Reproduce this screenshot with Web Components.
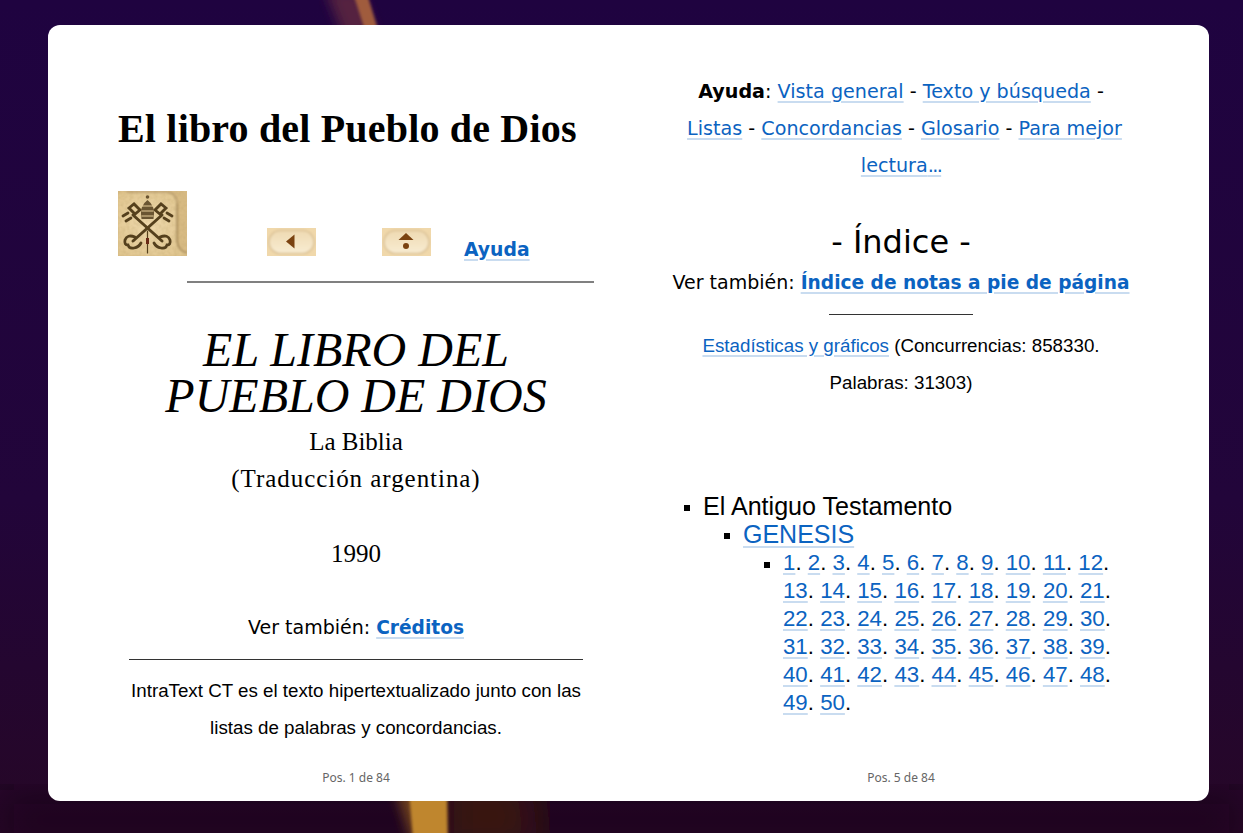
<!DOCTYPE html>
<html lang="es">
<head>
<meta charset="utf-8">
<title>El libro del Pueblo de Dios</title>
<style>
html, body { margin: 0; height: 100%; }
body { overflow: hidden; background: #1f0440; }
</style>
</head>
<body>
<reader-view>
  <book-page>
    <h-title slot="top">El libro del Pueblo de Dios</h-title>
    <nav-strip></nav-strip>
    <cover-block></cover-block>
    <span slot="pos">Pos. 1 de 84</span>
  </book-page>
  <book-page>
    <index-block></index-block>
    <span slot="pos">Pos. 5 de 84</span>
  </book-page>
</reader-view>

<script>
const linkCss = `
a { color: #0b63c1; text-decoration: underline 2px #c9dcf0; text-underline-offset: 3px; }
`;

class ReaderView extends HTMLElement {
    constructor() {
        super();
        const root = this.attachShadow({ mode: 'open' });
        root.innerHTML = `<style>
:host { display: block; position: relative; width: 1243px; height: 833px; overflow: hidden; box-sizing: border-box; padding: 25px 34px 32px 48px; }
.bg { position: absolute; inset: 0; width: 100%; height: 100%; }
.card { position: relative; height: 776px; background: #fff; border-radius: 12px; display: grid; grid-template-columns: 1fr 1fr; column-gap: 69px; padding: 0 70px; box-sizing: border-box; }
</style>
<svg class="bg" viewBox="0 0 1243 833" preserveAspectRatio="none">
  <defs>
    <linearGradient id="base" x1="0" y1="0" x2="0" y2="1">
      <stop offset="0" stop-color="#1f0340"/>
      <stop offset="0.6" stop-color="#22053a"/>
      <stop offset="1" stop-color="#260726"/>
    </linearGradient>
    <filter id="b2"><feGaussianBlur stdDeviation="1.5"/></filter>
    <filter id="b5"><feGaussianBlur stdDeviation="6"/></filter>
    <filter id="b10"><feGaussianBlur stdDeviation="20"/></filter>
  </defs>
  <rect width="1243" height="833" fill="url(#base)"/>
  <rect x="0" y="790" width="1243" height="60" fill="#180414" opacity="0.5" filter="url(#b10)"/>
  <path d="M325 -10 L360 -10 L378 40 L345 40 Z" fill="#54203f" filter="url(#b5)"/>
  <path d="M352 -10 L366 -10 L381 40 L368 40 Z" fill="#a05c3e" filter="url(#b2)"/>
  <path d="M440 780 L530 780 L540 850 L440 850 Z" fill="#3a120f" filter="url(#b10)"/>
  <path d="M392 780 L440 780 L440 850 L414 850 Z" fill="#6a3c1c" filter="url(#b5)"/>
  <path d="M408 780 L447 780 L448 850 L414 850 Z" fill="#bf862e" filter="url(#b2)"/>
</svg>
<div class="card"><slot></slot></div>`;
    }
}

class BookPage extends HTMLElement {
    constructor() {
        super();
        const root = this.attachShadow({ mode: 'open' });
        root.innerHTML = `<style>
:host { display: flex; flex-direction: column; position: relative; height: 100%; min-width: 0; }
.pos { position: absolute; left: 0; right: 0; top: 745px; text-align: center; font: 12px/15px "Noto Sans", sans-serif; color: #666; }
</style>
<slot name="top"></slot>
<slot></slot>
<div class="pos"><slot name="pos"></slot></div>`;
    }
}

class HTitle extends HTMLElement {
    constructor() {
        super();
        const root = this.attachShadow({ mode: 'open' });
        root.innerHTML = `<style>
:host { display: block; margin-top: 82px; font: bold 40px/44px "Liberation Serif", serif; color: #000; white-space: nowrap; letter-spacing: 0.18px; }
</style><slot></slot>`;
    }
}

class NavStrip extends HTMLElement {
    constructor() {
        super();
        const root = this.attachShadow({ mode: 'open' });
        root.innerHTML = `<style>
:host { display: block; margin-top: 40px; }
.row { display: flex; align-items: flex-end; height: 65px; }
svg { display: block; flex: none; }
.b1 { margin-left: 80px; }
.b2 { margin-left: 66px; }
.help { margin-left: 33px; font: bold 18.8px/24px "DejaVu Sans", sans-serif; margin-bottom: -6px; }
hr { margin: 25px 0 0 69px; border: 0; height: 2px; background: #808080; }
${linkCss}
</style>
<div class="row">
  <svg width="69" height="65" viewBox="0 0 69 65">
    <defs>
      <filter id="soft"><feGaussianBlur stdDeviation="0.5"/></filter>
      <filter id="soft2"><feGaussianBlur stdDeviation="1.2"/></filter>
      <filter id="grain" x="0" y="0" width="100%" height="100%">
        <feTurbulence type="fractalNoise" baseFrequency="0.25" numOctaves="2" seed="4"/>
        <feColorMatrix values="0 0 0 0 0.45  0 0 0 0 0.32  0 0 0 0 0.12  0.9 0 0 0 -0.3"/>
      </filter>
      <radialGradient id="paper" cx="0.45" cy="0.5" r="0.7">
        <stop offset="0" stop-color="#edd8ac"/>
        <stop offset="1" stop-color="#dfc48c"/>
      </radialGradient>
    </defs>
    <rect width="69" height="65" fill="#d8bb84"/>
    <g filter="url(#soft2)">
      <path d="M0 4 Q1 1 8 1 H48 Q58 1 59 12 V50 Q60 60 69 62 V65 H0 Z" fill="url(#paper)"/>
      <path d="M59 12 V50 Q60 60 69 62" fill="none" stroke="#9c8050" stroke-width="1.6"/>
      <path d="M8 1 H48 Q58 1 59 12" fill="none" stroke="#b2976a" stroke-width="1.4"/>
    </g>
    <rect width="69" height="65" filter="url(#grain)" opacity="0.45"/>
    <g filter="url(#soft)" fill="none" stroke="#54401f" stroke-linecap="round">
      <path d="M15 24 L44 50" stroke-width="3"/>
      <path d="M44 24 L15 50" stroke-width="3"/>
      <path d="M5 25 l5 -3 M8 30 l5 -3" stroke-width="2.8"/>
      <path d="M11 17 l5 -4 l6 6 l-5 4 z" stroke-width="2.8"/>
      <path d="M54 25 l-5 -3 M51 30 l-5 -3" stroke-width="2.8"/>
      <path d="M48 17 l-5 -4 l-6 6 l5 4 z" stroke-width="2.8"/>
      <path d="M17 46 q-8 -3 -10 3 q-1 5 3 5 q1 4 6 3 q5 -1 7 -5" stroke-width="2.8"/>
      <path d="M42 46 q8 -3 10 3 q1 5 -3 5 q-1 4 -6 3 q-5 -1 -7 -5" stroke-width="2.8"/>
      <path d="M29.5 40 V62" stroke-width="1.2"/>
    </g>
    <g filter="url(#soft)">
      <path d="M23.5 28 Q21 15 29.5 9 Q38 15 35.5 28 Z" fill="#6a5430"/>
      <circle cx="29.5" cy="6" r="1.8" fill="#6a5430"/>
      <path d="M24 15 H35 M23.5 20 H35.5 M23.5 25 H35.5" stroke="#e6cd9a" stroke-width="1" fill="none"/>
      <rect x="28" y="47" width="3" height="6" fill="#6b2a18"/>
    </g>
  </svg>
  <svg class="b1" width="49" height="28" viewBox="0 0 49 28">
    <defs>
      <filter id="bs"><feGaussianBlur stdDeviation="0.9"/></filter>
      <linearGradient id="pill" x1="0" y1="0" x2="0" y2="1">
        <stop offset="0" stop-color="#efdab2"/>
        <stop offset="1" stop-color="#f8ecd2"/>
      </linearGradient>
    </defs>
    <rect width="49" height="28" fill="#f0d8ab"/>
    <rect x="2" y="2.5" width="45" height="23" rx="11.5" fill="url(#pill)" stroke="#dcc398" stroke-width="1.6" filter="url(#bs)"/>
    <path d="M27.5 6.5 V20.5 L19 13.5 Z" fill="#7a4210"/>
  </svg>
  <svg class="b2" width="49" height="28" viewBox="0 0 49 28">
    <rect width="49" height="28" fill="#f0d8ab"/>
    <rect x="2" y="2.5" width="45" height="23" rx="11.5" fill="url(#pill)" stroke="#dcc398" stroke-width="1.6" filter="url(#bs)"/>
    <path d="M24 5 L31.5 12 H16.5 Z" fill="#7a4210"/>
    <circle cx="24" cy="18" r="3" fill="#7a4210"/>
  </svg>
  <div class="help"><a href="#">Ayuda</a></div>
</div>
<hr>`;
    }
}

class CoverBlock extends HTMLElement {
    constructor() {
        super();
        const root = this.attachShadow({ mode: 'open' });
        root.innerHTML = `<style>
:host { display: block; text-align: center; color: #000; }
.big { margin: 44px 0 0; font: italic 48px/46px "Liberation Serif", serif; }
.serif { margin-top: 4px; font: 25px/37px "Liberation Serif", serif; }
.wide { letter-spacing: 0.95px; }
.year { margin-top: 38px; }
.also { margin-top: 37px; font: 19px/37px "DejaVu Sans", sans-serif; }
.also a { font-weight: bold; font-size: 18.6px; }
hr { margin: 13px 11px 0; border: 0; height: 1px; background: #333; }
.note { margin-top: 12px; font: 18.75px/37px "Liberation Sans", sans-serif; }
${linkCss}
</style>
<div class="big">EL LIBRO DEL<br>PUEBLO DE DIOS</div>
<div class="serif">La Biblia<br><span class="wide">(Traducción argentina)</span></div>
<div class="serif year">1990</div>
<div class="also">Ver también: <a href="#">Créditos</a></div>
<hr>
<div class="note">IntraText CT es el texto hipertextualizado junto con las<br>listas de palabras y concordancias.</div>`;
    }
}

class IndexBlock extends HTMLElement {
    constructor() {
        super();
        const root = this.attachShadow({ mode: 'open' });
        const nums = [];
        for (let i = 1; i <= 50; i++) nums.push(`<a href="#">${i}</a>.`);
        const lines = [nums.slice(0, 12).join(' ')];
        for (let i = 12; i < 50; i += 9) lines.push(nums.slice(i, i + 9).join(' '));
        root.innerHTML = `<style>
:host { display: block; text-align: center; color: #000; padding-top: 48px; }
.help { font: 19.15px/37px "DejaVu Sans", sans-serif; }
.shift { display: inline-block; margin-left: 7px; }
.dots { letter-spacing: -1.6px; }
.idx { margin-top: 39px; font: 32px/38px "DejaVu Sans", sans-serif; }
.also { margin-top: 3px; font: 19px/37px "DejaVu Sans", sans-serif; white-space: nowrap; }
.also a { font-weight: bold; font-size: 18.6px; }
hr { width: 144px; margin: 13px auto 0; border: 0; height: 1px; background: #333; }
.stats { margin-top: 12px; font: 18.75px/37px "Liberation Sans", sans-serif; }
ul { list-style: none; text-align: left; margin: 0; padding: 0 0 0 40px; font: 25px/28px "Liberation Sans", sans-serif; }
ul.top { margin-top: 91px; font-size: 25.1px; }
ul ul ul { margin-top: 1px; font-size: 22.25px; }
li { position: relative; }
li::before { content: ""; position: absolute; left: -19px; top: 13px; width: 6px; height: 6px; background: #000; }
${linkCss}
</style>
<div class="help"><b>Ayuda</b>: <a href="#">Vista general</a> - <a href="#">Texto y búsqueda</a> -<br>
<span class="shift"><a href="#">Listas</a> - <a href="#">Concordancias</a> - <a href="#">Glosario</a> - <a href="#">Para mejor</a></span><br>
<a href="#">lectura<span class="dots">...</span></a></div>
<div class="idx">- Índice -</div>
<div class="also">Ver también: <a href="#">Índice de notas a pie de página</a></div>
<hr>
<div class="stats"><a href="#">Estadísticas y gráficos</a> (Concurrencias: 858330.<br>Palabras: 31303)</div>
<ul class="top"><li>El Antiguo Testamento
  <ul><li><a href="#">GENESIS</a>
    <ul><li>${lines.join('<br>')}</li></ul>
  </li></ul>
</li></ul>`;
    }
}

customElements.define('reader-view', ReaderView);
customElements.define('book-page', BookPage);
customElements.define('h-title', HTitle);
customElements.define('nav-strip', NavStrip);
customElements.define('cover-block', CoverBlock);
customElements.define('index-block', IndexBlock);
</script>
</body>
</html>
